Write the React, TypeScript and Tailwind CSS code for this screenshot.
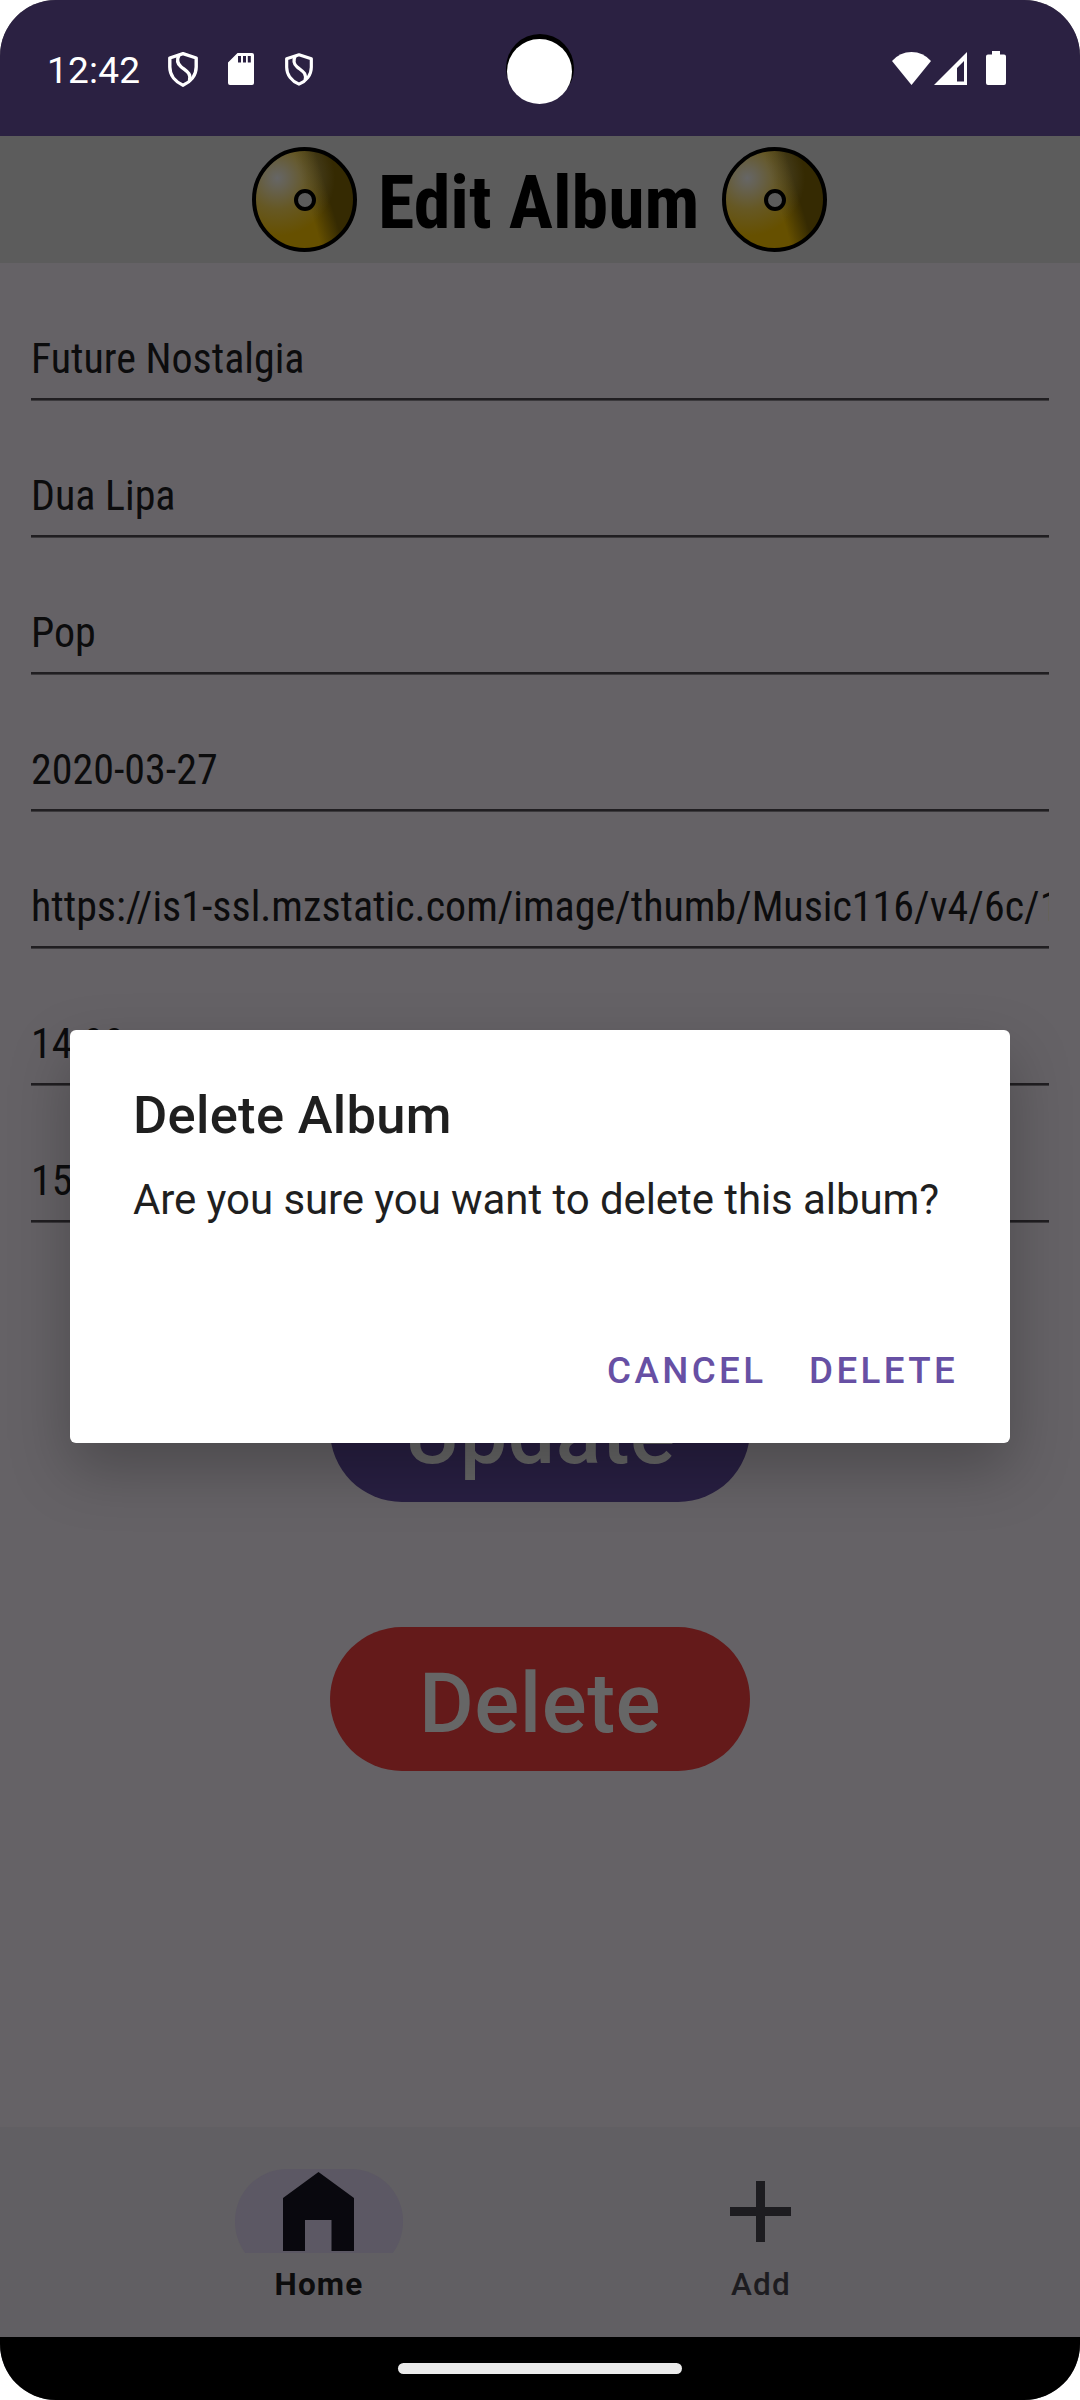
import React from "react";

const fields = [
  "Future Nostalgia",
  "Dua Lipa",
  "Pop",
  "2020-03-27",
  "https://is1-ssl.mzstatic.com/image/thumb/Music116/v4/6c/1",
  "14.99",
  "15",
];

function Shield({ className }: { className: string }) {
  return (
    <svg viewBox="0 0 30 35" className={className} fill="none" stroke="white" strokeWidth="3.400" strokeLinejoin="round">
      <path d="M15 1.700 L28.200 6 V15 C28.200 23.500 22.500 30 15 33.200 C7.500 30 1.800 23.500 1.800 15 V6 Z" />
      <path d="M11 3 C8.500 8 9 11.500 13 14.800 C18.500 19.300 23.500 21 21.500 29" />
    </svg>
  );
}

function Disc() {
  return (
    <div className="flex size-[105px] items-center justify-center rounded-full border-4 border-black bg-[radial-gradient(circle_at_22%_28%,#666666_0%,rgba(102,102,102,0.8)_10%,rgba(102,98,80,0.45)_30%,rgba(102,90,40,0)_56%),linear-gradient(73deg,#665000_52%,#352a02_70%)]">
      <div className="size-[22px] rounded-full border-4 border-black bg-[#5c5c5c]" />
    </div>
  );
}

export default function App() {
  return (
    <div className="h-[2400px] w-[1080px] bg-white font-['Roboto',sans-serif]">
      <div className="relative flex h-full w-full flex-col overflow-hidden rounded-[56px] bg-[#656266]">
        <div className="relative flex h-[136px] items-center bg-[#2b2142]">
          <span className="ml-[47px] mt-[5px] w-[121px] whitespace-nowrap text-[37px] leading-[44px] tracking-[0.2px] text-white">12:42</span>
          <Shield className="mt-[2px] h-[35px] w-[30px]" />
          <svg viewBox="0 0 26 32" className="ml-[30px] mt-[2px] h-[32px] w-[26px]">
            <path fill="white" fillRule="evenodd" d="M9.500 0H24Q26 0 26 2V30Q26 32 24 32H2Q0 32 0 30V9.500ZM10 3V9.500H13V3ZM15 3V9.500H18V3ZM19.800 3V9.500H22.800V3Z" />
          </svg>
          <Shield className="ml-[31px] mt-[2px] h-[33px] w-[28px]" />
          <div className="absolute left-[506px] top-[34px] size-[68px] rounded-full bg-black" />
          <div className="absolute left-[507px] top-[39px] size-[65px] rounded-full bg-white" />
          <div className="ml-auto mr-[74px] flex items-center">
            <svg viewBox="0 0 39 33" className="h-[33px] w-[39px]">
              <path fill="white" d="M19.500 33L0 9Q8 0 19.500 0T39 9Z" />
            </svg>
            <svg viewBox="0 0 33 33" className="ml-[3px] h-[33px] w-[33px]">
              <path fill="white" fillRule="evenodd" d="M33 0V33H0ZM30 9L23 16V29.500H30Z" />
            </svg>
            <svg viewBox="0 0 20 34" className="ml-[19px] h-[34px] w-[20px]">
              <path fill="white" d="M6 0H14V3.500H18Q20 3.500 20 5.500V32Q20 34 18 34H2Q0 34 0 32V5.500Q0 3.500 2 3.500H6Z" />
            </svg>
          </div>
        </div>

        <header className="flex h-[127px] items-center bg-[#5c5c5c] pl-[252px]">
          <Disc />
          <h1 className="ml-[21px] mt-[6px] w-[344px] whitespace-nowrap text-[74px] font-bold leading-[88px] text-black [font-stretch:75%]">Edit Album</h1>
          <Disc />
        </header>

        <main className="flex flex-col pt-px">
          {fields.map((f) => (
            <div key={f} className="flex h-[137px] flex-col justify-end px-[31px]">
              <div className="overflow-hidden whitespace-nowrap pb-[15px] text-[42px] leading-[48px] text-[#0c0c0d] [font-stretch:75%]">{f}</div>
              <div className="h-[3px] shrink-0 border-b border-[#3b393c] bg-[#201e21]" />
            </div>
          ))}
          <div className="mt-[135px] flex flex-col items-center gap-[125px]">
            <button className="h-[144px] w-[420px] rounded-[72px] bg-[#281f42] pt-[9px] text-[84px] font-medium leading-[98px] tracking-[0.5px] text-[#666666]">Update</button>
            <button className="h-[144px] w-[420px] rounded-[72px] bg-[#641a1a] pt-[9px] text-[84px] font-medium leading-[98px] tracking-[0.5px] text-[#666666]">Delete</button>
          </div>
        </main>

        <nav className="mt-auto flex h-[210px] bg-[#615f63] px-[98px] pt-[42px]">
          <div className="flex w-[442px] flex-col items-center">
            <div className="h-[84px] w-[168px] overflow-hidden">
              <div className="flex h-[105px] justify-center rounded-[52px] bg-[#5c5864] pr-px pt-[3px]">
                <svg viewBox="0 0 71 79" className="h-[79px] w-[71px]">
                  <path fill="#09080e" d="M35.500 0L71 26V79H48.500V48H22V79H0V26Z" />
                </svg>
              </div>
            </div>
            <span className="mt-[13px] text-[31.5px] font-bold leading-[38px] tracking-[1.2px] text-[#0c0c0d]">Home</span>
          </div>
          <div className="flex w-[442px] flex-col items-center">
            <div className="flex h-[84px] items-center pr-px pt-px">
              <svg viewBox="0 0 61 61" className="h-[61px] w-[61px]">
                <path stroke="#1d1c20" strokeWidth="9" d="M30.500 0V61M0 30.500H61" />
              </svg>
            </div>
            <span className="mt-[13px] text-[31.5px] font-medium leading-[38px] tracking-[1.2px] text-[#1d1c20]">Add</span>
          </div>
        </nav>
        <div className="flex h-[63px] shrink-0 justify-center bg-black pt-[26px]">
          <div className="h-[11px] w-[284px] rounded-full bg-[#ebebeb]" />
        </div>

        <div className="absolute left-[70px] top-[1030px] flex h-[413px] w-[940px] flex-col rounded-[6px] bg-white px-[63px] pt-[54px] text-[#1f1f1f] shadow-[0_26px_60px_rgba(0,0,0,0.25)]">
          <h2 className="whitespace-nowrap text-[52.5px] font-medium leading-[62px] tracking-[0.3px]">Delete Album</h2>
          <p className="mt-[29px] whitespace-nowrap text-[42px] leading-[50px] tracking-[-0.08px]">Are you sure you want to delete this album?</p>
          <div className="mt-[124px] flex text-[36.75px] font-medium leading-[44px] tracking-[3.4px] text-[#6750a4]">
            <button className="ml-[474px] w-[202px] shrink-0 text-left">CANCEL</button>
            <button className="shrink-0 text-left">DELETE</button>
          </div>
        </div>
      </div>
    </div>
  );
}
